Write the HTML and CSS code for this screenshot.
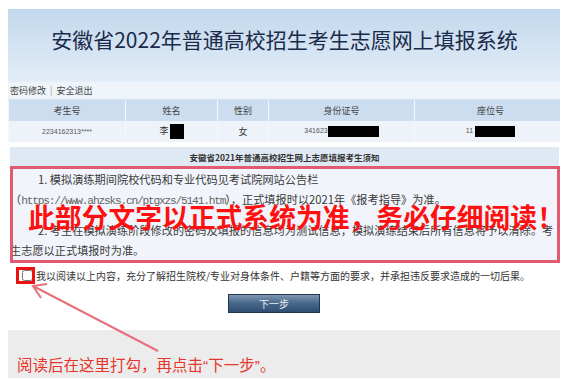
FILE: index.html
```html
<!DOCTYPE HTML>
<html>
  <head>
  <meta charset="UTF-8">
  <title>安徽省2022年普通高校招生考生志愿网上填报系统</title>
  <link rel="stylesheet" href="styles.css">
  </head>

  <body>
    <div class="page">
      <div class="header">
        <h1>安徽省2022年普通高校招生考生志愿网上填报系统</h1>
      </div>
      <div class="menu"><a>密码修改</a><span class="sep">|</span><a>安全退出</a></div>

      <table class="info">
        <tr>
          <th class="c1">考生号</th>
          <th class="c2">姓名</th>
          <th class="c3">性别</th>
          <th class="c4">身份证号</th>
          <th class="c5">座位号</th>
        </tr>
        <tr>
          <td class="num">2234162313****</td>
          <td>李<span class="mask name"></span></td>
          <td>女</td>
          <td class="num">341623<span class="mask idno"></span></td>
          <td class="num">11<span class="mask seat"></span></td>
        </tr>
      </table>

      <div class="notice">
        <div class="notice-title">安徽省2021年普通高校招生网上志愿填报考生须知</div>
        <div class="notice-body">
          <p>1. 模拟演练期间院校代码和专业代码见考试院网站公告栏<br>（<span class="url">https://www.ahzsks.cn/ptgxzs/5141.htm</span>），正式填报时以2021年《报考指导》为准。</p>
          <p>2. 考生在模拟演练阶段修改的密码及填报的信息均为测试信息，模拟演练结束后所有信息将予以清除。考<br>生志愿以正式填报时为准。</p>
        </div>
      </div>

      <div class="agree">
        <input type="checkbox" id="ok">
        <label for="ok">我以阅读以上内容，充分了解招生院校/专业对身体条件、户籍等方面的要求，并承担违反要求造成的一切后果。</label>
      </div>
      <div class="actions"><button>下一步</button></div>
      <div class="footer"></div>

      <!-- annotations drawn over the screenshot -->
      <div class="mark-box"></div>
      <div class="mark-text">此部分文字以正式系统为准，务必仔细阅读！</div>
      <div class="mark-check"></div>
      <svg class="mark-arrow" width="160" height="80" viewBox="0 0 160 80">
        <line x1="144" y1="73" x2="19" y2="8" />
        <polyline points="33,6 19,8 27,20" />
      </svg>
      <div class="mark-caption">阅读后在这里打勾，再点击<span class="q">“</span>下一步<span class="q">”</span>。</div>
    </div>
  </body>
</html>
```

FILE: styles.css
```css
body { margin: 8px; font-family: "Noto Sans CJK SC", sans-serif; color: #333; background: #fff; }
.page { position: relative; width: 553px; padding-top: 1px; }

.header {
  height: 73px;
  background: linear-gradient(#c2d8ed, #d6e5f3 60%, #e3edf7);
}
.header h1 {
  margin: 0;
  padding-top: 16px;
  text-align: center;
  font-size: 21px;
  font-weight: normal;
  line-height: 28px;
  color: #1b2a4a;
}

.menu {
  height: 17px;
  line-height: 17px;
  padding-left: 2px;
  font-size: 9px;
  color: #444;
  background: #eef4fa;
  border-bottom: 1px solid #d3e2f0;
}
.menu .sep { margin: 0 4px; color: #999; }

.info { width: 553px; border-collapse: collapse; table-layout: fixed; }
.info th, .info td {
  height: 21px;
  padding: 0;
  text-align: center;
  font-size: 9px;
  border-left: 1px solid #f4f8fc;
}
.info th { background: #cbddef; font-weight: normal; color: #444; }
.info td { background: #edf3f9; color: #333; }
.info .c1 { width: 116px; }
.info .c2 { width: 91px; }
.info .c3 { width: 50px; }
.info .c4 { width: 145px; }
.info .c5 { width: 151px; }
.info td.num { font-family: "Liberation Sans", sans-serif; font-size: 7px; color: #555; }
.mask { display: inline-block; background: #000; vertical-align: middle; }
.mask.name { width: 14px; height: 15px; margin-left: 1px; }
.mask.idno { width: 51px; height: 11px; }
.mask.seat { width: 40px; height: 11px; margin-left: 2px; }

.notice { margin: 5px 2px 0 2px; }
.notice-title {
  height: 20px;
  line-height: 20px;
  text-align: center;
  font-size: 8.5px;
  font-weight: bold;
  color: #333;
  background: #dfe9f3;
}
.notice-body {
  height: 88px;
  padding: 3px 0 4px 0;
  background: #f1f5fb;
  font-size: 11.2px;
  line-height: 19.5px;
  color: #3a3a3a;
  white-space: nowrap;
  overflow: hidden;
}
.notice-body p { margin: 0 0 10px 0; text-indent: 28px; }
.url { font-family: "Liberation Mono", monospace; letter-spacing: -1.2px; color: #666; }

.agree {
  display: flex;
  align-items: center;
  height: 16px;
  margin-top: 5px;
  padding-left: 13px;
  font-size: 10px;
  color: #333;
}
.agree input { width: 11px; height: 11px; margin: 0 3px 0 1px; }

.actions { margin-top: 6px; padding-left: 220px; }
.actions button {
  width: 92px;
  height: 19px;
  padding: 0;
  border: 1px solid #22374e;
  background: linear-gradient(#7f97b2, #4a6a8c 45%, #2e4d70);
  color: #e8eef5;
  font-family: "Noto Sans CJK SC", sans-serif;
  font-size: 10px;
}

.footer { height: 48px; margin-top: 17px; background: #ececec; }

.mark-box {
  position: absolute;
  left: 2px; top: 158px;
  width: 544px; height: 91px;
  border: 3px solid #e25a70;
}
.mark-text {
  position: absolute;
  left: 20px; top: 194px;
  font-size: 26.8px;
  font-weight: bold;
  line-height: 30px;
  color: #ff1010;
  white-space: nowrap;
}
.mark-check {
  position: absolute;
  left: 8px; top: 259px;
  width: 13px; height: 11px;
  border: 3px solid #ee1111;
}
.mark-arrow {
  position: absolute;
  left: 6px; top: 270px;
  fill: none;
  stroke: #e8707c;
  stroke-width: 2;
}
.mark-caption {
  position: absolute;
  left: 9px; top: 345px;
  font-size: 15.5px;
  line-height: 22px;
  color: #e5352b;
  white-space: nowrap;
}
.mark-caption .q { font-family: "Liberation Sans", sans-serif; }
```
